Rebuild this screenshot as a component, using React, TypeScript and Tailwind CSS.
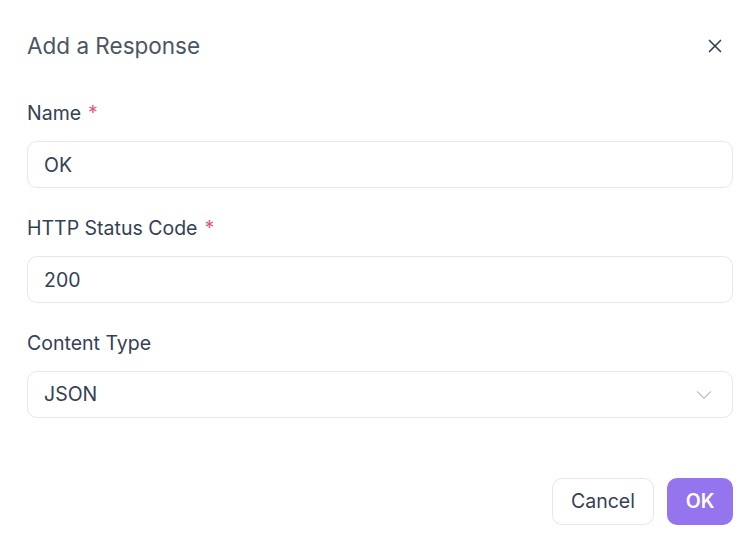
import React, { useState } from 'react';
import { X, ChevronDown } from 'lucide-react';

const Field: React.FC<{ label: string; required?: boolean; children: React.ReactNode }> = ({ label, required, children }) => (
  <div className="flex flex-col">
    <label className="text-[19.5px] leading-[28px] text-[#334155] mb-[14px]">
      {label}
      {required && <span className="text-[#e8557a] ml-[7px]">*</span>}
    </label>
    {children}
  </div>
);

const App: React.FC = () => {
  const [name, setName] = useState('OK');
  const [status, setStatus] = useState('200');

  return (
    <div className="w-[750px] h-[554px] bg-white pl-[27px] pr-[17px] pt-[32px] font-['Inter',sans-serif]">
      {/* Header */}
      <div className="flex items-center justify-between h-[28px]">
        <h2 className="text-[22.5px] leading-[28px] text-[#4b5563]">Add a Response</h2>
        <button className="w-[36px] h-[28px] flex items-center justify-center text-[#334155]">
          <X className="w-[22px] h-[22px]" strokeWidth={1.8} />
        </button>
      </div>

      <div className="mt-[39px] flex flex-col gap-[26px]">
        <Field label="Name" required>
          <input
            value={name}
            onChange={(e) => setName(e.target.value)}
            className="h-[47px] rounded-[10px] border border-[#e5e7eb] px-[16px] text-[19.5px] text-[#334155] outline-none"
          />
        </Field>
        <Field label="HTTP Status Code" required>
          <input
            value={status}
            onChange={(e) => setStatus(e.target.value)}
            className="h-[47px] rounded-[10px] border border-[#e5e7eb] px-[16px] text-[19.5px] text-[#334155] outline-none"
          />
        </Field>
        <Field label="Content Type">
          <div className="h-[47px] rounded-[10px] border border-[#e5e7eb] pl-[16px] pr-[15px] flex items-center justify-between">
            <span className="text-[19.5px] text-[#334155]">JSON</span>
            <ChevronDown className="w-[26px] h-[26px] text-[#c4c7cc]" strokeWidth={1.4} />
          </div>
        </Field>
      </div>

      {/* Footer */}
      <div className="mt-[60px] flex justify-end gap-[13px]">
        <button className="h-[47px] w-[102px] rounded-[10px] border border-[#e5e7eb] bg-white text-[19.5px] text-[#334155]">
          Cancel
        </button>
        <button className="h-[47px] w-[66px] rounded-[10px] bg-[#9575ed] text-[19.5px] font-semibold text-white">
          OK
        </button>
      </div>
    </div>
  );
};

export default App;
